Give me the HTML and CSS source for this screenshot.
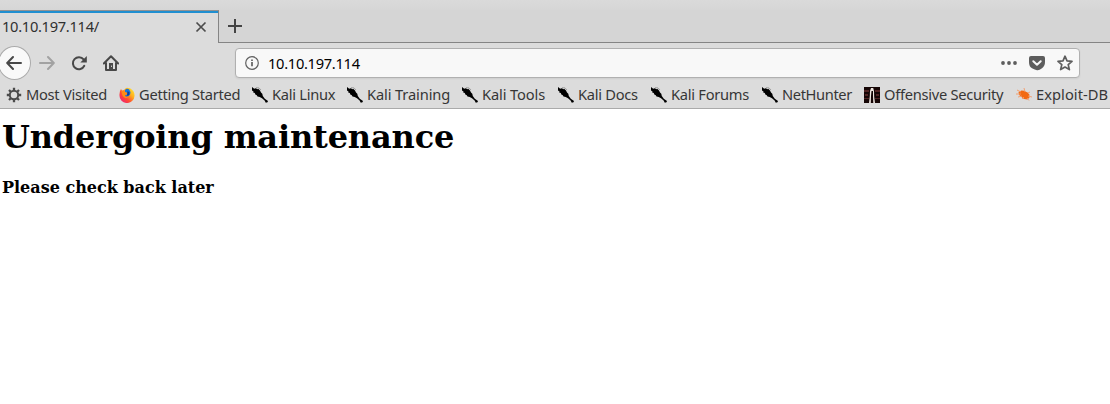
FILE: index.html
```html
<!DOCTYPE html>
<html lang="en">
<head>
<meta charset="utf-8">
<title>10.10.197.114/</title>
<link rel="stylesheet" href="styles.css">
</head>
<body>
<svg width="0" height="0" class="defs">
  <defs>
    <linearGradient id="flame" x1="1" y1="0" x2="0" y2="1"><stop offset="0" stop-color="#fff43c"/><stop offset=".35" stop-color="#ffb01c"/><stop offset=".62" stop-color="#ff4a32"/><stop offset="1" stop-color="#e9148c"/></linearGradient>
    <symbol id="kali" viewBox="0 0 16 16"><path d="M0 0l2.200 1.700 1.600-.4 1.800 1 .6-.6L8 3.500l1 2 1.300 1.200.5 2.300 2 2.700L16 14l-.5 1.300-1.700.5-1.200-2.300L10 11.300 7.700 10 5.500 9.500 4.800 8.200 3.300 7.600 2.800 6 1.200 5.500 1.500 4.500 0 3.400z"/><path d="M4 .6l3 .3 2 2.100" fill="none" stroke="#888" stroke-width=".7"/></symbol>
  </defs>
</svg>
<header class="chrome">
  <div class="tabs">
    <div class="tab"><span class="tab-title">10.10.197.114/</span>
      <svg class="close" width="12" height="12" viewBox="0 0 12 12"><path d="M1.500 1.500l9 9m0-9l-9 9"/></svg>
    </div>
    <div class="tab-rest"><svg class="plus" width="14" height="14" viewBox="0 0 14 14"><path d="M7 0v14M0 7h14"/></svg></div>
  </div>
  <nav class="toolbar">
    <div class="back"><svg class="line" width="16" height="16" viewBox="0 0 16 16"><path d="M15 8H1.500M7 2L1.200 8 7 14"/></svg></div>
    <svg class="line forward" width="16" height="16" viewBox="0 0 16 16"><path d="M1 8h13.500M9 2l5.800 6L9 14"/></svg>
    <svg class="line reload" width="16" height="16" viewBox="0 0 16 16"><path d="M13.300 10.800A6 6 0 1 1 12.600 4.400"/><path class="solid" d="M15.800 1v6.500H9.300z"/></svg>
    <svg class="line home" width="16" height="16" viewBox="0 0 16 16"><path d="M.8 8.500L8 1.300l7.200 7.200M3 8v7h10V8"/><path class="solid" d="M6 8h4v7H6z"/><path class="knob" d="M8.500 11v.5"/></svg>
    <div class="url">
      <svg class="info" width="14" height="14" viewBox="0 0 14 14"><circle cx="7" cy="7" r="6.300"/><path class="info-i" d="M7 6v4.300M7 3.400v1.500"/></svg>
      <span class="address">10.10.197.114</span>
      <svg class="dots" width="16" height="16" viewBox="0 0 16 16"><circle cx="2" cy="8" r="1.900"/><circle cx="8" cy="8" r="1.900"/><circle cx="14" cy="8" r="1.900"/></svg>
      <svg class="pocket" width="16" height="16" viewBox="0 0 16 16"><path fill="#5d5d5d" d="M2 1h12q2 0 2 2v4q0 4-3 6.300T8 15.200 3 13.300 0 7V3q0-2 2-2z"/><path d="M4.300 6.200L8 9.700l3.700-3.500" fill="none" stroke="#f7f7f7" stroke-width="2" stroke-linecap="round" stroke-linejoin="round"/></svg>
      <svg class="star" width="16" height="16" viewBox="0 0 16 16"><path d="M8 1.200l2 4.600 5 .5-3.800 3.300 1.200 5L8 12l-4.400 2.600 1.200-5L1 6.300l5-.5z"/></svg>
    </div>
  </nav>
  <div class="bookmarks">
    <div class="mark"><svg width="16" height="16" viewBox="0 0 16 16"><g fill="none" stroke="#4b4b4b"><circle cx="8" cy="8" r="4.200" stroke-width="2"/><path stroke-width="2.300" d="M8 .8v3M8 12.200v3M.8 8h3M12.200 8h3M3 3l2 2M11 11l2 2M13 3l-2 2M5 11l-2 2"/></g></svg><span>Most Visited</span></div>
    <div class="mark"><svg width="16" height="16" viewBox="0 0 16 16"><path fill="url(#flame)" d="M2 2l1 1.500L5 3l2-2 1-.3 3 .6q5 3 4.500 7.700A7.500 7.300 0 0 1 .5 8.500Q.3 4 2 2z"/><path fill="#1677dc" d="M6 3Q8 1 10 2.200q2 2.300 1.200 4.800-1 2.500-3.200 2.500Q6 9.500 6 8L8 7.500 8.500 6 6 5z"/><path fill="#ff8b16" d="M2.500 4l3 .8 2.700 1.300-.5 1.300-2 1q1 2.200 3.500 1.200-.8 1.900-3 1.500Q3 10 2.500 4z"/><path fill="#143c93" d="M8.500 4l2 1.500-.3 2.500-2.200.8z"/></svg><span>Getting Started</span></div>
    <div class="mark"><svg width="16" height="16"><use href="#kali"/></svg><span>Kali Linux</span></div>
    <div class="mark training"><svg width="16" height="16"><use href="#kali"/></svg><span>Kali Training</span></div>
    <div class="mark training"><svg width="16" height="16"><use href="#kali"/></svg><span>Kali Tools</span></div>
    <div class="mark"><svg width="16" height="16"><use href="#kali"/></svg><span>Kali Docs</span></div>
    <div class="mark"><svg width="16" height="16"><use href="#kali"/></svg><span>Kali Forums</span></div>
    <div class="mark net"><svg width="16" height="16"><use href="#kali"/></svg><span>NetHunter</span></div>
    <div class="mark"><svg width="16" height="16" viewBox="0 0 16 16"><path fill="#160606" d="M0 0h16v16H0z"/><path fill="#512323" d="M0 3h5v2H0zM11 3h5v2h-5zM1 7h3v2H1zM12 7h3v2h-3zM0 11h5v1H0zM11 11h5v1h-5z"/><path fill="#eee5df" d="M7 1h2.200L10 4l.2 6 .8 6H9.300L9 9V4H7.500L7 9l-.2 7H5l.8-7L6 4z"/></svg><span>Offensive Security</span></div>
    <div class="mark exploit"><svg width="16" height="16" viewBox="0 0 16 16"><path fill="#f26a13" d="M2.500 5l3-1.500 2.500.2 3 1.600 2.300 2 .2 3.200-2 2-3.500-.4-2.500-2L3.200 8z"/><path d="M1 3l4 2M0 7h5M2 10l4-1M8 1l1 4M6 12l2-2M12 6l2-1M12 9l4 1M11 11l2 2.500" fill="none" stroke="#f49a68" stroke-width=".9"/></svg><span>Exploit-DB</span></div>
  </div>
</header>
<main class="page">
  <h1>Undergoing maintenance</h1>
  <h4>Please check back later</h4>
</main>
</body>
</html>
```
FILE: styles.css
```css
* { box-sizing: border-box; }
body { margin: 0; background: #fff; overflow: hidden; color: #000; }
svg { display: block; flex: none; }
.defs { position: absolute; }
.chrome { height: 109px; padding-top: 10px; background: #dcdcdc; border-bottom: 1px solid #aaa; font-family: "Noto Sans", sans-serif; background-image: linear-gradient(#dadada, #d6d6d6 10px, transparent 10px); }
.tabs { display: flex; height: 33px; }
.tab { width: 219px; display: flex; align-items: center; padding: 0 11px 0 2px; border-top: 1px solid #929292; border-right: 1px solid #858585; background: linear-gradient(#208fd0 2px, #dcdcdc 2px); }
.tab-title { flex: 1; font-size: 14.667px; color: #303030; letter-spacing: -.3px; line-height: 20px; padding-bottom: 2px; }
.close { fill: none; stroke: #4c4c4c; stroke-width: 1.700; }
.tab-rest { flex: 1; border-bottom: 1px solid #858585; background: #d5d5d5; padding: 9px; }
.plus { stroke: #444; stroke-width: 2; }
.toolbar { height: 40px; display: flex; align-items: center; }
.back { width: 33px; height: 34px; margin-left: -2px; padding-right: 2px; border: 1px solid #aaa; border-radius: 50%; background: #f9f9f9; display: grid; place-items: center; }
.line { fill: none; stroke: #484848; stroke-width: 2; stroke-linecap: round; stroke-linejoin: round; }
.line .solid { fill: #484848; stroke: none; }
.line .knob { stroke: #dcdcdc; stroke-width: 1; }
.forward { margin-left: 8px; stroke: #a2a2a2; }
.reload { margin-left: 16px; }
.home { margin-left: 16px; }
.url { display: flex; align-items: center; margin-left: 116px; width: 845px; height: 30px; border: 1px solid #b0b0b0; border-radius: 4px; background: #f8f8f8; padding: 0 6px 0 9px; box-shadow: 0 1px 2px #0001; }
.info { fill: none; stroke: #606060; stroke-width: 1.200; }
.info-i { stroke-width: 1.700; }
.address { margin-left: 9px; flex: 1; font-size: 14.667px; line-height: 20px; letter-spacing: -.3px; }
.dots { fill: #5d5d5d; }
.pocket, .star { margin-left: 12px; }
.star { fill: none; stroke: #5d5d5d; stroke-width: 1.700; stroke-linejoin: round; }
.bookmarks { height: 25px; padding-left: 6px; display: grid; grid-template-columns: 113px 133px 95px 115px 96px 93px 111px 102px 152px 94px; }
.mark { display: flex; align-items: center; height: 24px; gap: 4px; white-space: nowrap; font-size: 14.667px; letter-spacing: -.27px; color: #363636; }
.mark span { line-height: 20px; padding-bottom: 2px; }
.training { letter-spacing: -.12px; }
.net { letter-spacing: -.38px; }
.exploit { letter-spacing: .05px; }
.page { padding: 10px 2px; font-family: "DejaVu Serif", serif; }
h1 { margin: 0; font-size: 32px; line-height: 37px; letter-spacing: -.16px; }
h4 { margin: 22px 0 0; font-size: 16px; line-height: 19px; }
```
